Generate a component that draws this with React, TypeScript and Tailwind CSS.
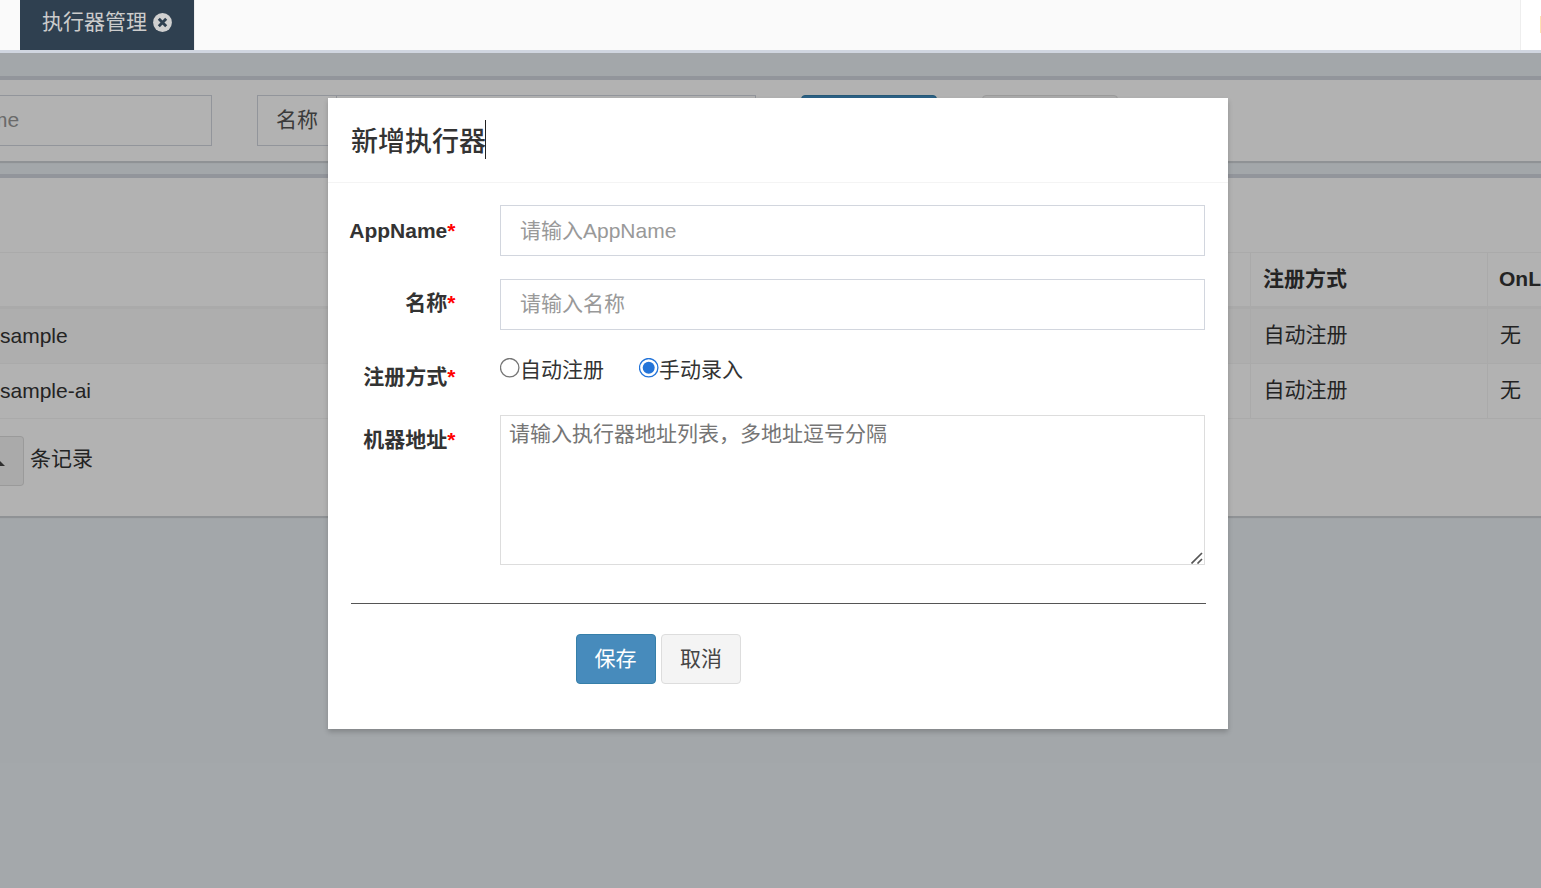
import React from 'react';

const rows = [
  { name: 'sample', type: '自动注册', online: '无' },
  { name: 'sample-ai', type: '自动注册', online: '无' },
];

const TabBar = () => {
  return (
    <div className="flex h-[53px] shrink-0 border-b-[3px] border-[#d0d6e0] bg-[#fafafa]">
      <div className="ml-5 flex w-[174px] items-start bg-[#2f4050] pt-[7px] pl-[22px] text-[#ccc]">
        <span className="leading-[30px]">执行器管理</span>
        <svg className="mt-[6px] ml-[6px] h-[19px] w-[19px]" viewBox="0 0 19 19">
          <circle cx="9.5" cy="9.5" r="9.4" fill="#d0d0d0" />
          <path d="M5.8 5.8l7.4 7.4M13.2 5.8l-7.4 7.4" stroke="#2f4050" strokeWidth="2.9" />
        </svg>
      </div>
      <div className="flex-1 border-l border-[#eee]" />
      <div className="flex w-[21px] items-start justify-end border-l border-[#eee] bg-white pt-4">
        <div className="h-[17px] w-px bg-[#ffe2b0]" />
      </div>
    </div>
  );
};

const SearchBox = () => {
  return (
    <div className="h-[85px] border-t-4 border-[#d2d6de] bg-white pt-[15px] shadow-[0_2px_1px_rgba(0,0,0,0.12)]">
      <div className="flex h-[51px]">
        <div className="w-[212px] overflow-hidden border-y border-r border-[#d2d6de] leading-[47px] text-[#999]">
          <span className="-ml-[10px]">me</span>
        </div>
        <div className="ml-[45px] flex w-[499px] border border-[#d2d6de]">
          <div className="w-[79px] border-r border-[#d2d6de] pl-[18px] leading-[48px] text-[#555]">名称</div>
        </div>
        <div className="ml-[45px] w-[136px] rounded border border-[#367fa9] bg-[#3f8cc0]" />
        <div className="ml-[45px] w-[136px] rounded border border-[#ddd] bg-[#f4f4f4]" />
      </div>
    </div>
  );
};

const TableBox = () => {
  return (
    <div className="mt-[13px] h-[342px] border-t-4 border-[#d2d6de] bg-white shadow-[0_2px_1px_rgba(0,0,0,0.12)]">
      <div className="h-[74px]" />
      <div className="flex h-[57px] border-t border-b-[3px] border-[#f4f4f4] font-bold leading-[52px]">
        <div className="w-[1250px]" />
        <div className="w-[237px] border-l border-[#f4f4f4] pl-3">注册方式</div>
        <div className="flex-1 overflow-hidden border-l border-[#f4f4f4] pl-[11px] whitespace-nowrap">OnLine</div>
      </div>
      {rows.map((row, i) => (
        <div
          key={row.name}
          className={`flex h-[55px] border-b border-[#f4f4f4] leading-[54px] ${i === 0 ? 'bg-[#f9f9f9]' : ''}`}
        >
          <div className="w-[1250px]">{row.name}</div>
          <div className="w-[237px] border-l border-[#f4f4f4] pl-[12.5px] leading-[52px]">{row.type}</div>
          <div className="flex-1 border-l border-[#f4f4f4] pl-3 leading-[52px]">{row.online}</div>
        </div>
      ))}
      <div className="mt-[17px] flex h-[50px]">
        <div className="flex w-6 items-center rounded-r border border-l-0 border-[#ddd] bg-[#f4f4f4]">
          <svg className="mt-[4px] h-[5px] w-[5px]" viewBox="0 0 5 5">
            <path d="M0 0L5 5H0z" fill="#444" />
          </svg>
        </div>
        <span className="ml-[6px] leading-[45px]">条记录</span>
      </div>
    </div>
  );
};

type FieldProps = {
  label: string;
  className: string;
  children: React.ReactNode;
};

const Field = ({ label, className, children }: FieldProps) => {
  return (
    <div className={`flex ${className}`}>
      <label className="w-[127.5px] shrink-0 text-right font-bold">
        {label}
        <span className="text-[#f00]">*</span>
      </label>
      <div className="ml-[44.5px] w-[705px] leading-[30px]">{children}</div>
    </div>
  );
};

const Radio = ({ checked, text }: { checked?: boolean; text: string }) => {
  return (
    <div className="flex items-start">
      <svg className="mt-[4px] h-5 w-5" viewBox="0 0 20 20">
        <circle cx="9.7" cy="9.7" r="9.2" fill="#fff" stroke={checked ? '#2374d9' : '#767676'} strokeWidth="1.3" />
        {checked && <circle cx="9.7" cy="9.7" r="6" fill="#2374d9" />}
      </svg>
      <span className="leading-[32px]">{text}</span>
    </div>
  );
};

const AddModal = () => {
  return (
    <div className="h-[631px] w-[900px] bg-white shadow-[0_3px_5px_rgba(0,0,0,0.2)]">
      <div className="flex h-[85px] border-b border-[#f4f4f4] pt-[22px] pl-[23px]">
        <h4 className="h-[39px] w-[135px] border-r border-[#222] text-[27px] font-medium leading-[45px] whitespace-nowrap">
          新增执行器
        </h4>
      </div>
      <div className="pt-[22px]">
        <Field label="AppName" className="h-[51px] leading-[51px]">
          <input
            className="h-[51px] w-full border border-[#d2d6de] px-[19px] outline-none placeholder:text-[#999]"
            placeholder="请输入AppName"
          />
        </Field>
        <Field label="名称" className="mt-[23px] h-[51px] leading-[48px]">
          <input
            className="h-[51px] w-full border border-[#d2d6de] px-[19px] pb-[2px] outline-none placeholder:text-[#999]"
            placeholder="请输入名称"
          />
        </Field>
        <Field label="注册方式" className="mt-[23px] h-[51px] leading-[48px]">
          <div className="flex gap-[35px] pt-[1px]">
            <Radio text="自动注册" />
            <Radio text="手动录入" checked />
          </div>
        </Field>
        <Field label="机器地址" className="mt-[11px] h-[150px] leading-[50px]">
          <div className="relative h-[150px]">
            <textarea
              className="block h-[150px] w-full resize-none border border-[#ddd] px-[8px] py-[3px] leading-[30px] outline-none placeholder:text-[#757575]"
              placeholder="请输入执行器地址列表，多地址逗号分隔"
            />
            <svg className="absolute right-[2px] bottom-[1px] h-3 w-3" viewBox="0 0 12 12">
              <path d="M.5 11.5L11 1M6.5 11.5L11 7" stroke="#555" strokeWidth="1.7" />
            </svg>
          </div>
        </Field>
        <div className="mt-[38px] ml-[23px] w-[855px] border-t border-[#555]" />
        <div className="mt-[30px] ml-[248px] flex gap-[5px]">
          <button className="h-[50px] w-20 rounded border border-[#367fa9] bg-[#478bbc] pr-px pb-px text-white">保存</button>
          <button className="h-[50px] w-20 rounded border border-[#ddd] bg-[#f4f4f4] pb-px text-[#444]">取消</button>
        </div>
      </div>
    </div>
  );
};

export default function App() {
  return (
    <div className="flex h-[888px] w-[1541px] flex-col overflow-hidden font-['Liberation_Sans','Noto_Sans_CJK_SC',sans-serif] text-[21px] text-[#333]">
      <TabBar />
      <div className="relative flex-1 bg-[#eaf0f4] pt-[23px]">
        <SearchBox />
        <TableBox />
        <div className="absolute inset-0 flex items-start bg-black/30 pt-[45px] pl-[328px]">
          <AddModal />
        </div>
      </div>
    </div>
  );
}
